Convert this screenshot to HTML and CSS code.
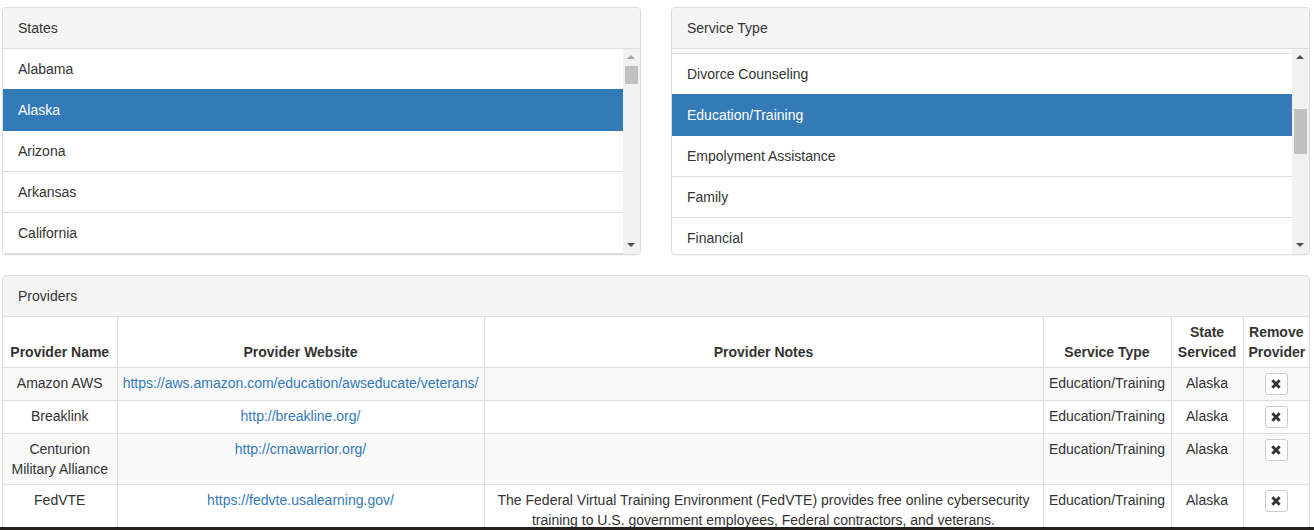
FILE: index.html
```html
<!DOCTYPE html>
<html>
<head>
<meta charset="utf-8">
<link rel="stylesheet" href="styles.css">
</head>
<body>
<div class="page">
  <div class="top-row">
    <div class="panel">
      <div class="panel-heading">States</div>
      <div class="list-wrap">
        <div class="list">
          <div class="item">Alabama</div>
          <div class="item active">Alaska</div>
          <div class="item">Arizona</div>
          <div class="item">Arkansas</div>
          <div class="item">California</div>
        </div>
        <div class="scrollbar">
          <div class="arrow up light"></div>
          <div class="track"><div class="thumb thumb-left"></div></div>
          <div class="arrow down"></div>
        </div>
      </div>
    </div>
    <div class="panel">
      <div class="panel-heading">Service Type</div>
      <div class="list-wrap">
        <div class="list">
          <div class="item-partial"></div>
          <div class="item">Divorce Counseling</div>
          <div class="item active">Education/Training</div>
          <div class="item">Empolyment Assistance</div>
          <div class="item">Family</div>
          <div class="item">Financial</div>
        </div>
        <div class="scrollbar">
          <div class="arrow up"></div>
          <div class="track"><div class="thumb thumb-right"></div></div>
          <div class="arrow down"></div>
        </div>
      </div>
    </div>
  </div>

  <div class="panel providers">
    <div class="panel-heading">Providers</div>
    <table class="table">
      <colgroup>
        <col class="c-name"><col class="c-site"><col class="c-notes"><col class="c-type"><col class="c-state"><col class="c-remove">
      </colgroup>
      <thead>
        <tr>
          <th>Provider Name</th>
          <th>Provider Website</th>
          <th>Provider Notes</th>
          <th>Service Type</th>
          <th>State Serviced</th>
          <th>Remove Provider</th>
        </tr>
      </thead>
      <tbody>
        <tr class="striped">
          <td>Amazon AWS</td>
          <td><a href="#">https://aws.amazon.com/education/awseducate/veterans/</a></td>
          <td></td>
          <td>Education/Training</td>
          <td>Alaska</td>
          <td><span class="btn"><svg width="10" height="10" viewBox="0 0 10 10"><path d="M1.3 1.3 L8.7 8.7 M8.7 1.3 L1.3 8.7" stroke="#333" stroke-width="2.9" fill="none"/></svg></span></td>
        </tr>
        <tr>
          <td>Breaklink</td>
          <td><a href="#">http://breakline.org/</a></td>
          <td></td>
          <td>Education/Training</td>
          <td>Alaska</td>
          <td><span class="btn"><svg width="10" height="10" viewBox="0 0 10 10"><path d="M1.3 1.3 L8.7 8.7 M8.7 1.3 L1.3 8.7" stroke="#333" stroke-width="2.9" fill="none"/></svg></span></td>
        </tr>
        <tr class="striped">
          <td>Centurion Military Alliance</td>
          <td><a href="#">http://cmawarrior.org/</a></td>
          <td></td>
          <td>Education/Training</td>
          <td>Alaska</td>
          <td><span class="btn"><svg width="10" height="10" viewBox="0 0 10 10"><path d="M1.3 1.3 L8.7 8.7 M8.7 1.3 L1.3 8.7" stroke="#333" stroke-width="2.9" fill="none"/></svg></span></td>
        </tr>
        <tr>
          <td>FedVTE</td>
          <td><a href="#">https://fedvte.usalearning.gov/</a></td>
          <td>The Federal Virtual Training Environment (FedVTE) provides free online cybersecurity training to U.S. government employees, Federal contractors, and veterans.</td>
          <td>Education/Training</td>
          <td>Alaska</td>
          <td><span class="btn"><svg width="10" height="10" viewBox="0 0 10 10"><path d="M1.3 1.3 L8.7 8.7 M8.7 1.3 L1.3 8.7" stroke="#333" stroke-width="2.9" fill="none"/></svg></span></td>
        </tr>
      </tbody>
    </table>
  </div>
</div>
<div class="bottom-bar"></div>
</body>
</html>
```
FILE: styles.css
```css
html, body {
  margin: 0;
  padding: 0;
  background: #fff;
}
body {
  font-family: "Liberation Sans", Arial, sans-serif;
  font-size: 14px;
  line-height: 20px;
  color: #333;
  width: 1314px;
  height: 530px;
  overflow: hidden;
}
.page {
  width: 1308px;
  height: 527px;
  overflow: hidden;
  margin-left: 2px;
  padding-top: 7px;
  box-sizing: border-box;
}
.top-row {
  display: grid;
  grid-template-columns: 639px 639px;
  column-gap: 30px;
  margin-bottom: 20px;
}
.panel {
  border: 1px solid #ddd;
  border-radius: 4px;
  background: #fff;
  box-shadow: 0 1px 1px rgba(0,0,0,.05);
  overflow: hidden;
}
.panel-heading {
  background: #f5f5f5;
  border-bottom: 1px solid #ddd;
  padding: 10px 15px;
  height: 20px;
}
.list-wrap {
  display: flex;
  height: 205px;
}
.list {
  flex: 1;
  overflow: hidden;
}
.item-partial {
  height: 4px;
  border-bottom: 1px solid #ddd;
}
.item {
  height: 20px;
  padding: 10px 15px;
  border-bottom: 1px solid #ddd;
  white-space: nowrap;
}
.item.active {
  background: #337ab7;
  border-bottom-color: #337ab7;
  color: #fff;
  margin-top: -1px;
  padding-top: 11px;
}
.scrollbar {
  width: 17px;
  background: #f1f1f1;
  display: flex;
  flex-direction: column;
}
.arrow {
  height: 17px;
  position: relative;
}
.arrow::after {
  content: "";
  position: absolute;
  left: 4px;
  width: 0;
  height: 0;
  border-left: 4px solid transparent;
  border-right: 4px solid transparent;
}
.arrow.up::after {
  top: 6px;
  border-bottom: 4px solid #505050;
}
.arrow.up.light::after {
  border-bottom-color: #a3a3a3;
}
.arrow.down::after {
  top: 6px;
  border-top: 4px solid #505050;
}
.track {
  flex: 1;
  padding: 0 2px;
}
.thumb {
  background: #c1c1c1;
}
.thumb-left {
  height: 18px;
}
.thumb-right {
  margin-top: 43px;
  height: 45px;
}
.table {
  border-collapse: collapse;
  table-layout: fixed;
  width: 1306px;
}
.c-name { width: 114px; }
.c-site { width: 367px; }
.c-notes { width: 559px; }
.c-type { width: 128px; }
.c-state { width: 72px; }
.c-remove { width: 66px; }
.table th, .table td {
  border: 1px solid #ddd;
  padding: 5px;
  text-align: center;
  vertical-align: top;
}
.table th {
  font-weight: bold;
  vertical-align: bottom;
  border-top: 0;
}
.table tr > :first-child { border-left: 0; }
.table tr > :last-child { border-right: 0; }
.table tr.striped td {
  background: #f9f9f9;
}
.table a {
  color: #337ab7;
  text-decoration: none;
}
.btn {
  display: inline-flex;
  align-items: center;
  justify-content: center;
  box-sizing: border-box;
  width: 23px;
  height: 22px;
  background: #fff;
  border: 1px solid #ccc;
  border-radius: 3px;
  vertical-align: top;
}
.bottom-bar {
  height: 3px;
  background: #24201c;
}
```
